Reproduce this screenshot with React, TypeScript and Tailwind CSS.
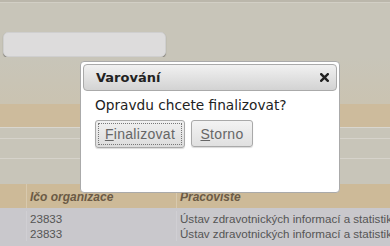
import React from "react";

const dv = { fontFamily: '"DejaVu Sans", Verdana, sans-serif' };
const ar = { fontFamily: '"Liberation Sans", Arial, sans-serif' };

export default function App() {
  return (
    <div className="relative w-[390px] h-[246px] overflow-hidden bg-[#c8c5b9] leading-none" style={ar}>
      {/* page behind the modal */}
      <div className="h-[3px] bg-[#bbb7ab] border-b border-[#d2cfc5]" />
      <div className="pt-[29px] pl-[3px]">
        <div className="w-[163px] h-[25px] rounded-[5px] bg-[#dddcdc] border border-[#cfcfcf] shadow-[0_1px_1px_rgba(0,0,0,0.35)]" />
      </div>
      <div className="h-[47px] bg-gradient-to-b from-[#c8c5b9] to-[#cac3b1]" />
      <div className="h-[23px] bg-[#cdbb9c]" />
      <div className="border-t border-[#d9d6ce]">
        <div className="h-[11px] border-b border-[#d6d3cb]" />
        <div className="h-[20px] border-b border-[#d6d3cb]" />
        <div className="h-[25px]" />
      </div>
      {/* table */}
      <div className="flex h-[24px] bg-[#cdba98] text-[12px] font-bold italic text-[#6b5a45]">
        <div className="w-[27px] shrink-0 border-r border-[#d8c9ae]" />
        <div className="w-[150px] shrink-0 pl-[3px] pt-[2px] leading-[22px] border-r border-[#d8c9ae]">Ičo organizace</div>
        <div className="min-w-0 flex-1 pl-[3px] pt-[2px] leading-[22px] whitespace-nowrap">Pracoviste</div>
      </div>
      <div className="bg-[#c9c8cc] text-[11.6px] text-[#555] pt-[3px]">
        {[0, 1].map((i) => (
          <div key={i} className="flex h-[15px] leading-[15px]">
            <div className="w-[27px] shrink-0 border-r border-[#d0cfd3]" />
            <div className="w-[150px] shrink-0 pl-[3px] border-r border-[#d0cfd3]">23833</div>
            <div className="min-w-0 flex-1 pl-[3px] whitespace-nowrap overflow-hidden">
              Ústav zdravotnických informací a statistik
            </div>
          </div>
        ))}
        <div className="h-[10px]" />
      </div>

      {/* modal */}
      <div className="absolute left-[80px] top-[61px] w-[260px] h-[132px] bg-white border border-[#aaaaaa] rounded-[4px] p-[2px]">
        <div
          className="h-[27px] rounded-[4px] border border-[#aaaaaa] bg-gradient-to-b from-[#f1f1f1] to-[#d3d3d3] flex items-center justify-between pl-[12px] pr-[7px]"
          style={dv}
        >
          <span className="text-[13px] font-bold text-[#222]">Varování</span>
          <svg width="9" height="9" viewBox="0 0 9 9">
            <path d="M1.2 1.2 L7.8 7.8 M7.8 1.2 L1.2 7.8" stroke="#222" strokeWidth="2.4" strokeLinecap="square" />
          </svg>
        </div>
        <div className="pl-[12px] pt-[6px]">
          <p className="text-[13.7px] leading-[17px] text-[#222]" style={dv}>
            Opravdu chcete finalizovat?
          </p>
          <div className="flex gap-[6px] mt-[6px]" style={ar}>
            <button className="w-[90px] h-[28px] rounded-[3px] border border-[#a9a9a9] bg-gradient-to-b from-[#f0f0f0] to-[#dcdcdc] p-[2px] shadow-[0_1px_1px_rgba(0,0,0,0.15)]">
              <span className="flex h-full items-center justify-center border border-dotted border-[#777] text-[14px] text-[#666] tracking-[0.3px]">
                <span className="underline">F</span>inalizovat
              </span>
            </button>
            <button className="w-[62px] h-[27px] rounded-[3px] border border-[#a9a9a9] bg-gradient-to-b from-[#f3f3f3] to-[#e0e0e0] text-[14px] text-[#666] tracking-[0.3px] shadow-[0_1px_1px_rgba(0,0,0,0.15)]">
              <span className="underline">S</span>torno
            </button>
          </div>
        </div>
      </div>
    </div>
  );
}
